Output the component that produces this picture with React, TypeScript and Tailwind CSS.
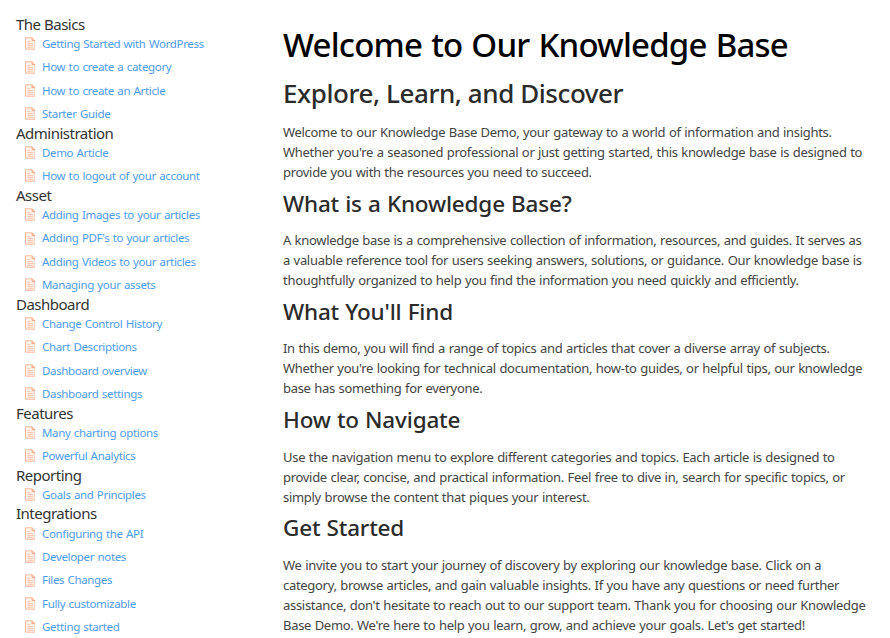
const groups: { title: string; items: string[] }[] = [
  { title: "The Basics", items: ["Getting Started with WordPress", "How to create a category", "How to create an Article", "Starter Guide"] },
  { title: "Administration", items: ["Demo Article", "How to logout of your account"] },
  { title: "Asset", items: ["Adding Images to your articles", "Adding PDF's to your articles", "Adding Videos to your articles", "Managing your assets"] },
  { title: "Dashboard", items: ["Change Control History", "Chart Descriptions", "Dashboard overview", "Dashboard settings"] },
  { title: "Features", items: ["Many charting options", "Powerful Analytics"] },
  { title: "Reporting", items: ["Goals and Principles"] },
  { title: "Integrations", items: ["Configuring the API", "Developer notes", "Files Changes", "Fully customizable", "Getting started"] },
];

const sections: { title: string; lines: string[] }[] = [
  {
    title: "What is a Knowledge Base?",
    lines: [
      "A knowledge base is a comprehensive collection of information, resources, and guides. It serves as",
      "a valuable reference tool for users seeking answers, solutions, or guidance. Our knowledge base is",
      "thoughtfully organized to help you find the information you need quickly and efficiently.",
    ],
  },
  {
    title: "What You'll Find",
    lines: [
      "In this demo, you will find a range of topics and articles that cover a diverse array of subjects.",
      "Whether you're looking for technical documentation, how-to guides, or helpful tips, our knowledge",
      "base has something for everyone.",
    ],
  },
  {
    title: "How to Navigate",
    lines: [
      "Use the navigation menu to explore different categories and topics. Each article is designed to",
      "provide clear, concise, and practical information. Feel free to dive in, search for specific topics, or",
      "simply browse the content that piques your interest.",
    ],
  },
  {
    title: "Get Started",
    lines: [
      "We invite you to start your journey of discovery by exploring our knowledge base. Click on a",
      "category, browse articles, and gain valuable insights. If you have any questions or need further",
      "assistance, don't hesitate to reach out to our support team. Thank you for choosing our Knowledge",
      "Base Demo. We're here to help you learn, grow, and achieve your goals. Let's get started!",
    ],
  },
];

function ArticleIcon() {
  return (
    <svg viewBox="0 0 11 13" className="h-[13px] w-[10.5px] shrink-0" fill="none" stroke="#fcb699">
      <path d="M.5.5h7l3 3v9H.5z" fill="#fff3ec" />
      <path d="M7.5.5v3h3" stroke="#f99a72" />
      <path d="M2.5 4.5h3M2.5 6.5h6M2.5 8.5h6M2.5 10.5h6" strokeWidth=".8" />
    </svg>
  );
}

function Paragraph({ lines }: { lines: string[] }) {
  return (
    <p className="text-[13px] leading-5 tracking-[-0.3px] [word-spacing:0.5px] text-[#444]">
      {lines.map((line) => (
        <span key={line} className="block whitespace-nowrap">{line}</span>
      ))}
    </p>
  );
}

export default function App() {
  return (
    <div className="flex h-[638px] w-[890px] overflow-hidden bg-white font-['Noto_Sans',sans-serif]">
      <nav className="w-[283px] shrink-0 pl-4 pt-[16.7px]">
        {groups.map((group) => (
          <section key={group.title}>
            <h3 className="h-[15.2px] whitespace-nowrap text-[15px] leading-[15.2px] tracking-[-0.5px] text-[#333]">{group.title}</h3>
            <ul>
              {group.items.map((item) => (
                <li key={item} className="flex h-[23.45px] items-center gap-[7px] whitespace-nowrap pl-[8.5px] text-[11.5px] tracking-[-0.34px] [word-spacing:0.7px] text-[#4f9ced]">
                  <ArticleIcon />
                  <a>{item}</a>
                </li>
              ))}
            </ul>
          </section>
        ))}
      </nav>
      <main className="pt-[22px]">
        <h1 className="whitespace-nowrap text-[33px] font-medium leading-[46px] tracking-[-0.8px] [word-spacing:1.2px] text-black">Welcome to Our Knowledge Base</h1>
        <h2 className="mb-[11px] mt-[7px] whitespace-nowrap text-[26px] font-medium leading-9 tracking-[-0.43px] text-[#2b2b2b]">Explore, Learn, and Discover</h2>
        <Paragraph
          lines={[
            "Welcome to our Knowledge Base Demo, your gateway to a world of information and insights.",
            "Whether you're a seasoned professional or just getting started, this knowledge base is designed to",
            "provide you with the resources you need to succeed.",
          ]}
        />
        {sections.map((section) => (
          <section key={section.title} className="pt-[5.6px]">
            <h3 className="mb-[10.65px] whitespace-nowrap text-[22.5px] font-medium leading-8 tracking-[-0.18px] [word-spacing:0.5px] text-[#2b2b2b]">{section.title}</h3>
            <Paragraph lines={section.lines} />
          </section>
        ))}
      </main>
    </div>
  );
}
